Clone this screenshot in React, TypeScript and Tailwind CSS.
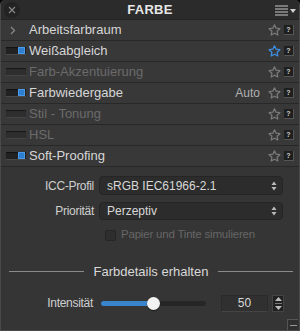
import React from 'react';

const font = { fontFamily: '"Liberation Sans", Arial, sans-serif' };

function Star({ active }: { active?: boolean }) {
  return (
    <svg width="13" height="12" viewBox="0 0 24 23" className="shrink-0">
      <path
        d="M12 1.5l3.1 6.6 7.2.9-5.3 5 1.4 7.1L12 17.6l-6.4 3.5 1.4-7.1-5.3-5 7.2-.9z"
        fill="none"
        stroke={active ? '#3d8fe6' : '#7a7a7a'}
        strokeWidth="2.4"
        strokeLinejoin="round"
      />
    </svg>
  );
}

function Help() {
  return (
    <div className="w-[10px] h-[10px] bg-[#1f1f1f] border-b border-r border-[#555] flex items-center justify-center text-[7px] font-bold text-[#cfcfcf] leading-none">
      ?
    </div>
  );
}

function Toggle({ on, dim }: { on?: boolean; dim?: boolean }) {
  return (
    <div
      className={`w-[20px] h-[8px] flex items-center justify-end pr-[1px] border-b ${
        dim ? 'bg-[#2e2e2e] border-[#444]' : 'bg-[#222] border-[#4a4a4a]'
      } shadow-[inset_0_1px_1px_rgba(0,0,0,0.5)]`}
    >
      {on && <div className="w-[7px] h-[7px] bg-[#2f7fd0] border border-[#4a9ae8]" />}
    </div>
  );
}

type Row = { label: string; toggle?: 'on' | 'off'; chevron?: boolean; dim?: boolean; star?: boolean; extra?: string };

const rows: Row[] = [
  { label: 'Arbeitsfarbraum', chevron: true },
  { label: 'Weißabgleich', toggle: 'on', star: true },
  { label: 'Farb-Akzentuierung', toggle: 'off', dim: true },
  { label: 'Farbwiedergabe', toggle: 'on', extra: 'Auto' },
  { label: 'Stil - Tonung', toggle: 'off', dim: true },
  { label: 'HSL', toggle: 'off', dim: true },
  { label: 'Soft-Proofing', toggle: 'on' },
];

function Stepper() {
  return (
    <svg width="6" height="10" viewBox="0 0 6 10">
      <path d="M3 0.5L5.5 4H0.5z" fill="#bbb" />
      <path d="M3 9.5L5.5 6H0.5z" fill="#bbb" />
    </svg>
  );
}

export default function App() {
  return (
    <div className="w-[300px] h-[331px] bg-black" style={font}>
      <div className="w-[300px] h-[331px] bg-[#353535] rounded-t-[5px] flex flex-col border-x border-b border-[#4a4a4a] overflow-hidden">
        {/* Header */}
        <div className="h-[20px] shrink-0 bg-[#2b2b2b] flex items-center relative border-b border-[#242424]">
          <div className="absolute left-[3px] top-[2px] w-[16px] h-[16px] rounded-full bg-[#232323] flex items-center justify-center">
            <svg width="8" height="8" viewBox="0 0 8 8">
              <path d="M1 1l6 6M7 1l-6 6" stroke="#8a8a8a" strokeWidth="1.1" />
            </svg>
          </div>
          <div className="flex-1 text-center text-[13px] font-bold text-[#e6e6e6] tracking-[0.3px]">FARBE</div>
          <div className="absolute right-[3px] top-[5px] flex items-center gap-[1px]">
            <svg width="14" height="11" viewBox="0 0 14 11">
              <path d="M0 1h13M0 4h13M0 7h13M0 10h13" stroke="#c8c8c8" strokeWidth="1.2" />
            </svg>
            <svg width="6" height="4" viewBox="0 0 6 4">
              <path d="M0 0h6L3 4z" fill="#d0d0d0" />
            </svg>
          </div>
        </div>

        {/* Tool rows */}
        {rows.map((r) => (
          <div
            key={r.label}
            className="h-[21px] shrink-0 flex items-center border-b border-[#282828] bg-[#383838] pr-[5px]"
          >
            <div className="w-[28px] flex items-center justify-center pl-[2px] shrink-0">
              {r.chevron ? (
                <svg width="6" height="9" viewBox="0 0 6 9" className="mr-[6px]">
                  <path d="M1 1l3.5 3.5L1 8" stroke="#8a8a8a" strokeWidth="1.2" fill="none" />
                </svg>
              ) : (
                <Toggle on={r.toggle === 'on'} dim={r.dim} />
              )}
            </div>
            <div className={`flex-1 text-[13px] ${r.dim ? 'text-[#6b6b6b]' : 'text-[#d6d6d6]'}`}>{r.label}</div>
            {r.extra && <div className="text-[12px] text-[#b0b0b0] mr-[8px]">{r.extra}</div>}
            <div className="flex items-center gap-[3px]">
              <Star active={r.star} />
              <Help />
            </div>
          </div>
        ))}

        {/* Soft-Proofing content */}
        <div className="flex-1 flex flex-col pt-[9px] relative">
          <div className="flex items-center h-[19px]">
            <div className="w-[93px] text-right text-[12px] text-[#cfcfcf] tracking-[-0.3px]">ICC-Profil</div>
            <div className="ml-[5px] w-[184px] h-[19px] rounded-[4px] bg-[#2c2c2c] border border-[#252525] flex items-center pl-[7px] pr-[5px]">
              <div className="flex-1 text-[12px] text-[#d8d8d8]">sRGB IEC61966-2.1</div>
              <Stepper />
            </div>
          </div>
          <div className="flex items-center h-[19px] mt-[6px]">
            <div className="w-[93px] text-right text-[12px] text-[#cfcfcf] tracking-[-0.3px]">Priorität</div>
            <div className="ml-[5px] w-[184px] h-[18px] rounded-[4px] bg-[#2c2c2c] border border-[#252525] flex items-center pl-[7px] pr-[5px]">
              <div className="flex-1 text-[12px] text-[#d8d8d8]">Perzeptiv</div>
              <Stepper />
            </div>
          </div>
          <div className="flex items-center mt-[9px] pl-[104px] h-[12px]">
            <div className="w-[11px] h-[11px] rounded-[2px] bg-[#2e2e2e] border border-[#262626]" />
            <div className="ml-[5px] text-[11.5px] tracking-[-0.2px] text-[#666]">Papier und Tinte simulieren</div>
          </div>

          <div className="flex items-center mt-[21px] pl-[8px] pr-[6px] gap-[10px]">
            <div className="flex-1 h-px bg-[#8a8a8a]" />
            <div className="text-[13px] text-[#d8d8d8]">Farbdetails erhalten</div>
            <div className="flex-1 h-px bg-[#8a8a8a]" />
          </div>

          <div className="flex items-center mt-[13px] h-[17px]">
            <div className="w-[92px] text-right text-[12px] text-[#cfcfcf] tracking-[-0.3px]">Intensität</div>
            <div className="ml-[8px] w-[105px] h-[5px] rounded-full bg-[#262626] relative">
              <div className="absolute left-0 top-0 h-[5px] w-[52px] rounded-full bg-[#3a84cc]" />
              <div className="absolute left-[46px] top-[-4px] w-[13px] h-[13px] rounded-full bg-[#f2f2f2] shadow-[0_1px_1px_rgba(0,0,0,0.5)]" />
            </div>
            <div className="ml-[15px] w-[47px] h-[17px] bg-[#303030] border border-[#2a2a2a] border-b-[#444] flex items-center justify-center text-[12px] text-[#d8d8d8]">
              50
            </div>
            <div className="ml-[4px] w-[12px] h-[17px] bg-[#222] border border-[#444] flex flex-col items-center justify-center gap-[2px]">
              <svg width="7" height="4" viewBox="0 0 7 4">
                <path d="M3.5 0L7 4H0z" fill="#bbb" />
              </svg>
              <div className="w-[7px] h-px bg-[#777]" />
              <svg width="7" height="4" viewBox="0 0 7 4">
                <path d="M3.5 4L7 0H0z" fill="#bbb" />
              </svg>
            </div>
          </div>

          <div className="absolute right-[1px] bottom-0 w-[11px] h-[11px] border-l border-t border-[#555] bg-[#303030] flex items-center justify-center">
            <div className="w-[7px] h-px bg-[#999]" />
          </div>
        </div>
      </div>
    </div>
  );
}
